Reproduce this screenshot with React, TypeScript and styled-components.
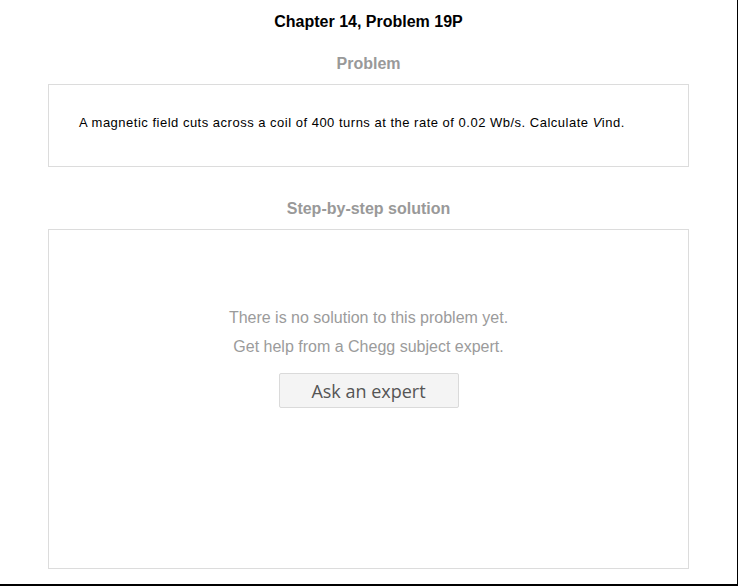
import React from "react";
import styled, { createGlobalStyle } from "styled-components";

const Global = createGlobalStyle`
  html, body { margin: 0; padding: 0; background: #fff; }
  body { font-family: Arial, "Liberation Sans", sans-serif; }
  * { box-sizing: border-box; }
`;

const Page = styled.div`
  width: 738px;
  height: 586px;
  border-right: 1px solid #000;
  border-bottom: 2px solid #000;
  display: flex;
  flex-direction: column;
  align-items: center;
  overflow: hidden;
`;

const Title = styled.h1`
  margin: 12px 0 0;
  font-size: 16px;
  line-height: 20px;
  font-weight: bold;
  color: #000;
  text-align: center;
`;

const SectionHeading = styled.h2<{ $top: number }>`
  margin: ${(p) => p.$top}px 0 10px;
  font-size: 16px;
  line-height: 20px;
  font-weight: bold;
  color: #999;
  text-align: center;
`;

const Card = styled.div<{ $height: number }>`
  width: 641px;
  height: ${(p) => p.$height}px;
  border: 1px solid #dcdcdc;
  background: #fff;
`;

const ProblemCard = styled(Card)`
  padding: 30px 30px 0;
  font-size: 13px;
  line-height: 16px;
  letter-spacing: 0.5px;
  color: #000;
`;

const SolutionCard = styled(Card)`
  display: flex;
  flex-direction: column;
  align-items: center;
  padding-top: 73px;
`;

const Notice = styled.p`
  margin: 0;
  font-size: 16px;
  line-height: 29px;
  color: #9b9b9b;
  text-align: center;
`;

const AskButton = styled.button`
  margin-top: 12px;
  width: 180px;
  height: 35px;
  border: 1px solid #dadada;
  border-radius: 2px;
  background: #f4f4f4;
  color: #555;
  font-family: "Open Sans", "Segoe UI", sans-serif;
  font-size: 18px;
  padding: 0;
  cursor: pointer;
`;

export default function App() {
  return (
    <>
      <Global />
      <Page>
        <Title>Chapter 14, Problem 19P</Title>
        <SectionHeading $top={22}>Problem</SectionHeading>
        <ProblemCard $height={83}>
          A magnetic field cuts across a coil of 400 turns at the rate of 0.02 Wb/s. Calculate <i>V</i>ind.
        </ProblemCard>
        <SectionHeading $top={32}>Step-by-step solution</SectionHeading>
        <SolutionCard $height={340}>
          <Notice>There is no solution to this problem yet.</Notice>
          <Notice>Get help from a Chegg subject expert.</Notice>
          <AskButton>Ask an expert</AskButton>
        </SolutionCard>
      </Page>
    </>
  );
}
